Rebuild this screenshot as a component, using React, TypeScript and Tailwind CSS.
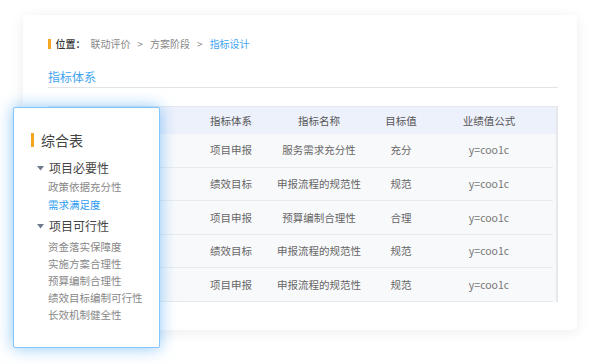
const font = { fontFamily: '"Noto Sans CJK SC", "Noto Sans", sans-serif' }

const rows = [
  { sys: "项目申报", name: "服务需求充分性", target: "充分", formula: "y=coo1c" },
  { sys: "绩效目标", name: "申报流程的规范性", target: "规范", formula: "y=coo1c" },
  { sys: "项目申报", name: "预算编制合理性", target: "合理", formula: "y=coo1c" },
  { sys: "绩效目标", name: "申报流程的规范性", target: "规范", formula: "y=coo1c" },
  { sys: "项目申报", name: "申报流程的规范性", target: "规范", formula: "y=coo1c" },
]

const cols = "grid grid-cols-[139px_88px_88px_76px_100px_1fr]"

function Caret() {
  return (
    <svg width="7" height="5" viewBox="0 0 7 5" className="ml-[6px] mr-[5px]">
      <path d="M0 0 L7 0 L3.5 4.5 Z" fill="#6f7b8c" />
    </svg>
  )
}

export default function App() {
  return (
    <div className="relative w-[592px] h-[364px] bg-white overflow-hidden" style={font}>
      <div className="pt-[15px] pl-[23px]">
        {/* main card */}
        <div className="w-[554px] h-[315px] bg-white rounded-[5px] shadow-[0_2px_14px_rgba(0,0,0,0.08)] pt-[23px] pl-[25px] pr-[19px]">
          {/* breadcrumb */}
          <div className="flex items-center h-[11px] text-[10px] leading-[11px]">
            <div className="w-[2.5px] h-[10px] bg-[#f5a623] mr-[5px]" />
            <span className="text-[#333] font-medium">位置：</span>
            <span className="text-[#888] ml-[5px]">联动评价</span>
            <span className="text-[#888] mx-[7px]">&gt;</span>
            <span className="text-[#888]">方案阶段</span>
            <span className="text-[#888] mx-[7px]">&gt;</span>
            <span className="text-[#3fa4f2]">指标设计</span>
          </div>

          {/* heading */}
          <div className="mt-[21px] text-[12px] leading-[14px] text-[#3fa4f2]">指标体系</div>
          <div className="mt-[3px] h-px bg-[#e4e4e4]" />

          {/* table */}
          <div className="mt-[18px] border-t border-r-2 border-[#e6e8ec] text-[10.5px] text-[#666]">
            <div className={`${cols} h-[27px] items-center bg-[#edf1fb] text-[#555] text-center`}>
              <div />
              <div>指标体系</div>
              <div>指标名称</div>
              <div>目标值</div>
              <div>业绩值公式</div>
              <div />
            </div>
            {rows.map((r, i) => (
              <div key={i} className="bg-[#f8f9fb]">
                <div className={`${cols} h-[32.6px] items-center text-center`}>
                  <div />
                  <div>{r.sys}</div>
                  <div>{r.name}</div>
                  <div>{r.target}</div>
                  <div className="text-[#777]">{r.formula}</div>
                  <div />
                </div>
                <div className="h-px mr-[3px] bg-[#e8eaee]" />
              </div>
            ))}
          </div>
        </div>
      </div>

      {/* floating side panel */}
      <div className="absolute left-[13px] top-[107px] w-[147px] h-[241px] bg-white border border-[#86c5fa] rounded-[2px] shadow-[0_0_16px_rgba(64,160,245,0.6)] pt-[25px] pl-[17px]">
        <div className="flex items-center h-[14px]">
          <div className="w-[3px] h-[14px] bg-[#f5a623] mr-[7px]" />
          <span className="text-[14px] leading-[14px] text-[#444]">综合表</span>
        </div>

        <div className="mt-[11px] flex items-center h-[20px] text-[12px] text-[#444]">
          <Caret />
          <span>项目必要性</span>
        </div>
        <div className="pl-[17px] text-[10.5px]">
          <div className="h-[18px] leading-[18px] text-[#888]">政策依据充分性</div>
          <div className="h-[18px] leading-[18px] text-[#2f9bf0]">需求满足度</div>
        </div>

        <div className="mt-[2px] flex items-center h-[20px] text-[12px] text-[#444]">
          <Caret />
          <span>项目可行性</span>
        </div>
        <div className="pl-[17px] pt-[2px] text-[10.5px] text-[#888]">
          <div className="h-[17px] leading-[17px]">资金落实保障度</div>
          <div className="h-[17px] leading-[17px]">实施方案合理性</div>
          <div className="h-[17px] leading-[17px]">预算编制合理性</div>
          <div className="h-[17px] leading-[17px]">绩效目标编制可行性</div>
          <div className="h-[17px] leading-[17px]">长效机制健全性</div>
        </div>
      </div>
    </div>
  )
}
